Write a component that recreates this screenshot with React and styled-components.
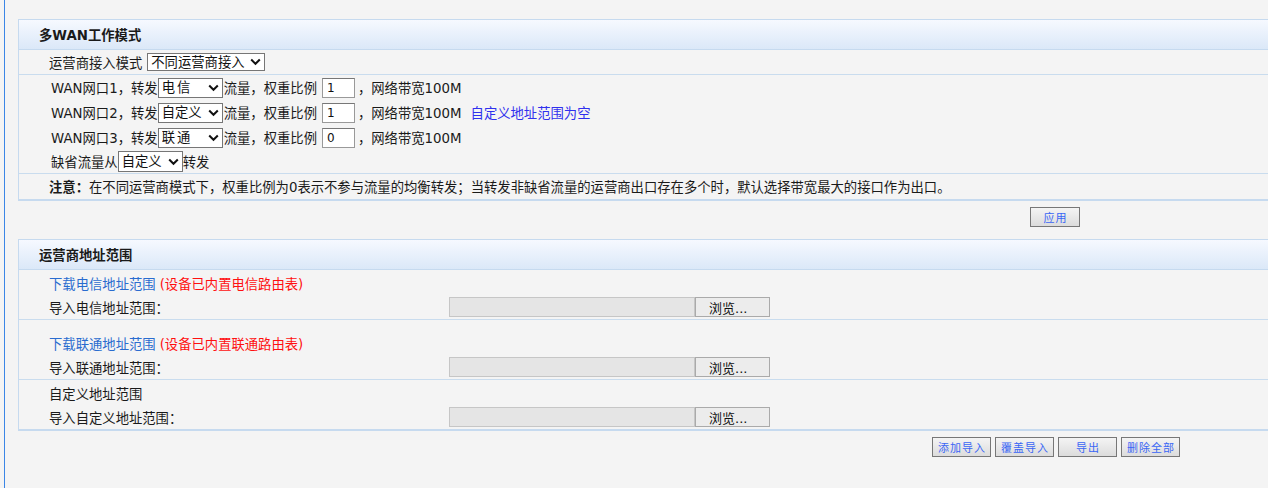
import styled, { createGlobalStyle } from "styled-components";

const GlobalStyle = createGlobalStyle`
html, body {
  margin: 0;
  padding: 0;
  background: #f4f4f4;
}
body {
  font-family: "DejaVu Sans", "Noto Sans CJK SC", sans-serif;
  font-size: 13.33px;
  color: #1a1a1a;
}
`;

const Frame = styled.div`
margin-left: 4px;
border-left: 1px solid #3b86e6;
min-height: 488px;
box-sizing: border-box;
padding: 19px 0 0 13px;
`;

const Panel = styled.div`
border: 1px solid #c6daef;
border-right: none;
border-bottom: 2px solid #c6daef;
`;

const Header = styled.div`
height: 29px;
display: flex;
align-items: center;
padding-left: 20px;
font-weight: bold;
background: linear-gradient(#f6f9ff, #dbe8f8);
border-bottom: 1px solid #c6daef;
`;

const Section = styled.div`
display: flex;
flex-direction: column;
padding: ${(p) => p.$pad || "0"};
padding-left: ${(p) => p.$left || 30}px;
border-top: ${(p) => (p.$first ? "none" : "1px solid #c9dcee")};
`;

const Line = styled.div`
height: ${(p) => p.$h || 25}px;
display: flex;
align-items: center;
white-space: nowrap;
`;

const SelectWrap = styled.span`
position: relative;
display: inline-flex;
width: ${(p) => p.$w}px;
height: ${(p) => p.$h || 20}px;
margin: 0 ${(p) => p.$mr || 0}px 0 ${(p) => p.$ml || 0}px;
`;

const NativeSelect = styled.select`
appearance: none;
width: 100%;
height: 100%;
box-sizing: border-box;
border: 1px solid #767676;
background: #fff;
font: inherit;
color: #111;
padding: 0 0 0 3px;
letter-spacing: ${(p) => p.$ls || 0}px;
outline: none;
`;

const Chevron = styled.svg`
position: absolute;
right: 4px;
top: 50%;
transform: translateY(-50%);
pointer-events: none;
`;

function Select({ value, w, h, ml, mr, ls }) {
  return (
    <SelectWrap $w={w} $h={h} $ml={ml} $mr={mr}>
      <NativeSelect $ls={ls} defaultValue={value}>
        <option>{value}</option>
      </NativeSelect>
      <Chevron width="11" height="8" viewBox="0 0 11 8">
        <path d="M1.2 1.5 L5.5 5.8 L9.8 1.5" fill="none" stroke="#111" strokeWidth="2" />
      </Chevron>
    </SelectWrap>
  );
}

const Weight = styled.input`
width: 33px;
height: 20px;
box-sizing: border-box;
margin: 0 3px 0 5px;
border: 1px solid #999;
border-top-color: #777;
background: #fff;
font: inherit;
font-size: 12px;
padding: 0 4px;
color: #111;
outline: none;
`;

const Hint = styled.span`
margin-left: 9px;
color: #3030ee;
`;

const Note = styled.div`
height: 25px;
display: flex;
align-items: center;
padding-left: 30px;
border-top: 1px solid #c9dcee;
white-space: nowrap;
b { font-weight: bold; }
`;

const ButtonRow = styled.div`
display: flex;
justify-content: flex-end;
gap: 4px;
padding: ${(p) => p.$pad};
`;

const Btn = styled.button`
width: ${(p) => p.$w || 59}px;
height: 20px;
box-sizing: border-box;
border: 1px solid #777;
background: linear-gradient(#f4f4f4, #dcdcdc);
color: #3a66f5;
font-family: "DejaVu Sans", "Noto Sans CJK SC", sans-serif;
font-size: 11px;
padding: 0 0 0 1px;
letter-spacing: 1px;
`;

const Link = styled.span`
color: #2a6ccf;
`;

const Red = styled.span`
color: #ff1010;
margin-left: 4px;
`;

const Label = styled.span`
width: 400px;
`;

const FileBox = styled.span`
width: 246px;
height: 20px;
box-sizing: border-box;
background: #e5e5e5;
border: 1px solid #c6c6c6;
`;

const Browse = styled.span`
width: 75px;
height: 20px;
box-sizing: border-box;
display: flex;
align-items: center;
padding-left: 13px;
background: #ececec;
border: 1px solid #aaa;
font-size: 13px;
color: #111;
`;

function FileLine({ label }) {
  return (
    <Line $h={24}>
      <Label>{label}</Label>
      <FileBox />
      <Browse>浏览...</Browse>
    </Line>
  );
}

export default function App() {
  return (
    <>
      <GlobalStyle />
      <Frame>
        <Panel>
          <Header>多WAN工作模式</Header>
          <Section $first $left={30}>
            <Line $h={24}>
              运营商接入模式
              <Select value="不同运营商接入" w={118} h={18} ml={5} />
            </Line>
          </Section>
          <Section $left={32} $pad="0 0 0">
            <Line>WAN网口1，转发<Select value="电信" w={65} mr={1} ls={2} />流量，权重比例<Weight defaultValue="1" />，网络带宽100M</Line>
            <Line>WAN网口2，转发<Select value="自定义" w={65} mr={1} />流量，权重比例<Weight defaultValue="1" />，网络带宽100M<Hint>自定义地址范围为空</Hint></Line>
            <Line>WAN网口3，转发<Select value="联通" w={65} mr={1} ls={2} />流量，权重比例<Weight defaultValue="0" />，网络带宽100M</Line>
            <Line $h={23}>缺省流量从<Select value="自定义" w={65} h={21} />转发</Line>
          </Section>
          <Note>
            <b>注意：</b>在不同运营商模式下，权重比例为0表示不参与流量的均衡转发；当转发非缺省流量的运营商出口存在多个时，默认选择带宽最大的接口作为出口。
          </Note>
        </Panel>
        <ButtonRow $pad="6px 188px 12px 0">
          <Btn $w={50}>应用</Btn>
        </ButtonRow>
        <Panel>
          <Header>运营商地址范围</Header>
          <Section $first $left={30} $pad="1px 0 0">
            <Line $h={24}><Link>下载电信地址范围</Link><Red>(设备已内置电信路由表)</Red></Line>
            <FileLine label="导入电信地址范围：" />
          </Section>
          <Section $left={30} $pad="11px 0 0">
            <Line $h={24}><Link>下载联通地址范围</Link><Red>(设备已内置联通路由表)</Red></Line>
            <FileLine label="导入联通地址范围：" />
          </Section>
          <Section $left={30} $pad="1px 0 0">
            <Line $h={24}>自定义地址范围</Line>
            <FileLine label="导入自定义地址范围：" />
          </Section>
        </Panel>
        <ButtonRow $pad="6px 88px 0 0">
          <Btn>添加导入</Btn>
          <Btn>覆盖导入</Btn>
          <Btn>导出</Btn>
          <Btn>删除全部</Btn>
        </ButtonRow>
      </Frame>
    </>
  );
}
